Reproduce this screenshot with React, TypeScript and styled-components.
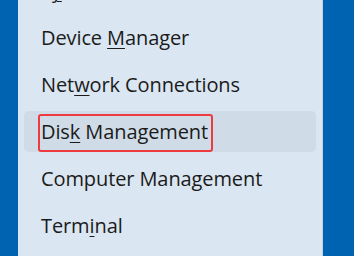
import styled, { createGlobalStyle } from "styled-components";

const GlobalStyle = createGlobalStyle`
  html, body {
    margin: 0;
    padding: 0;
    background: #0063b1;
  }
`;

type Item = { before: string; key: string; after: string };

const items: Item[] = [
  { before: "S", key: "y", after: "stem" },
  { before: "Device ", key: "M", after: "anager" },
  { before: "Net", key: "w", after: "ork Connections" },
  { before: "Dis", key: "k", after: " Management" },
  { before: "Computer Mana", key: "g", after: "ement" },
  { before: "Term", key: "i", after: "nal" },
];

export default function App() {
  return (
    <>
      <GlobalStyle />
      <Screen>
        <Menu>
          <List>
            {items.map((item, i) => {
              const active = i === 3;
              return (
                <Row key={i} $active={active}>
                  <Label>
                    {item.before}
                    <Access>{item.key}</Access>
                    {item.after}
                  </Label>
                  {active && <Callout />}
                </Row>
              );
            })}
          </List>
        </Menu>
      </Screen>
    </>
  );
}

const Screen = styled.div`
  width: 354px;
  height: 256px;
  overflow: hidden;
  background: #0063b1;
  padding-left: 18px;
  box-sizing: border-box;
`;

const Menu = styled.div`
  width: 305px;
  height: 256px;
  overflow: hidden;
  background: #dae6f1;
  border-right: 1px solid #c4d2de;
  box-sizing: border-box;
  padding: 0 6px 0 6px;
`;

const List = styled.ul`
  list-style: none;
  margin: -30px 0 0 0;
  padding: 0;
  display: flex;
  flex-direction: column;
  gap: 6px;
`;

const Row = styled.li<{ $active: boolean }>`
  position: relative;
  height: 41px;
  display: flex;
  align-items: center;
  padding-left: 17px;
  border-radius: 5px;
  background: ${(p) => (p.$active ? "#cfdce8" : "transparent")};
`;

const Label = styled.span`
  font-family: "Open Sans", "Noto Sans", sans-serif;
  font-size: 20px;
  letter-spacing: -0.1px;
  color: #1b1b1b;
  white-space: nowrap;
  line-height: 1;
  padding-top: 1px;
`;

const Access = styled.span`
  text-decoration: underline;
  text-underline-offset: 3px;
  text-decoration-thickness: 1px;
`;

const Callout = styled.div`
  position: absolute;
  left: 14px;
  top: 3px;
  width: 175px;
  height: 38px;
  border: 2px solid #ee3b3f;
  border-radius: 3px;
  box-sizing: border-box;
`;
